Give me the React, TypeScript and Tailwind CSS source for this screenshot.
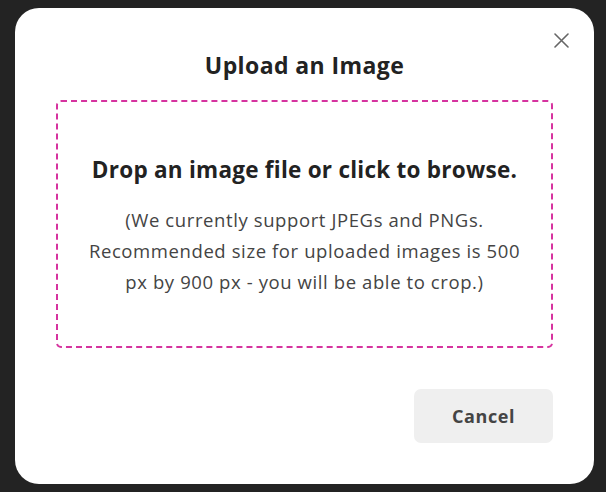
export default function App() {
  return (
    <div className="w-[606px] h-[492px] bg-[#232323] pt-[8px] pl-[15px] font-['Open_Sans',sans-serif]">
      <div className="relative w-[579px] h-[476px] bg-white rounded-[24px] px-[41px] pt-[42px] pb-[41px] flex flex-col">
        <button className="absolute top-[21px] right-[21px] p-[4px]">
          <svg width="15" height="15" viewBox="0 0 15 15" fill="none" stroke="#666" strokeWidth="1.6" strokeLinecap="round">
            <path d="M1 1 14 14M14 1 1 14" />
          </svg>
        </button>
        <h2 className="text-center text-[23px] leading-[30px] font-bold tracking-[0.4px] text-[#222]">
          Upload an Image
        </h2>
        <div className="mt-[20px] h-[248px] pt-[4px] border-2 border-dashed border-[#d6339f] rounded-[5px] flex flex-col items-center justify-center">
          <p className="text-[22.5px] leading-[30px] font-bold tracking-[0.25px] text-[#222]">
            Drop an image file or click to browse.
          </p>
          <p className="mt-[19px] text-center text-[18.5px] leading-[31px] tracking-[0.6px] text-[#444]">
            (We currently support JPEGs and PNGs.
            <br />
            Recommended size for uploaded images is 500
            <br />
            px by 900 px - you will be able to crop.)
          </p>
        </div>
        <div className="mt-auto flex justify-end">
          <button className="w-[139px] h-[54px] rounded-[7px] bg-[#efefef] text-[18px] font-bold tracking-[0.6px] text-[#444]">
            Cancel
          </button>
        </div>
      </div>
    </div>
  );
}
